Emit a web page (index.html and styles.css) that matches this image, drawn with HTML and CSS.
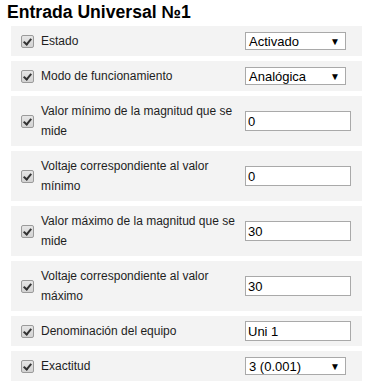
FILE: index.html
```html
<!DOCTYPE html>
<html lang="es">
<head>
    <meta charset="UTF-8">
    <meta name="viewport" content="width=device-width, initial-scale=1.0">
    <title>Entrada Universal №1</title>
    <link rel="stylesheet" href="styles.css">
</head>
<body>
    <h1>Entrada Universal №1</h1>

    <div class="settings">
        <div class="row">
            <span class="check"></span>
            <label class="name">Estado</label>
            <div class="select"><span>Activado</span><span class="arrow">▼</span></div>
        </div>
        <div class="row">
            <span class="check"></span>
            <label class="name">Modo de funcionamiento</label>
            <div class="select"><span>Analógica</span><span class="arrow">▼</span></div>
        </div>
        <div class="row tall">
            <span class="check"></span>
            <label class="name">Valor mínimo de la magnitud que se mide</label>
            <input type="text" value="0">
        </div>
        <div class="row tall">
            <span class="check"></span>
            <label class="name">Voltaje correspondiente al valor mínimo</label>
            <input type="text" value="0">
        </div>
        <div class="row tall">
            <span class="check"></span>
            <label class="name">Valor máximo de la magnitud que se mide</label>
            <input type="text" value="30">
        </div>
        <div class="row tall">
            <span class="check"></span>
            <label class="name">Voltaje correspondiente al valor máximo</label>
            <input type="text" value="30">
        </div>
        <div class="row">
            <span class="check"></span>
            <label class="name">Denominación del equipo</label>
            <input type="text" value="Uni 1">
        </div>
        <div class="row">
            <span class="check"></span>
            <label class="name">Exactitud</label>
            <div class="select"><span>3 (0.001)</span><span class="arrow">▼</span></div>
        </div>
    </div>
</body>
</html>
```

FILE: styles.css
```css
body {
    font-family: "Liberation Sans", Arial, sans-serif;
    background: #fff;
    color: #1e1e1e;
    margin: 0;
    padding: 0;
}
h1 {
    font-size: 17.6px;
    line-height: 20px;
    font-weight: bold;
    color: #000;
    margin: 0 0 4px 0;
    padding: 2px 0 0 7px;
}
.settings {
    width: 351px;
    margin-left: 11px;
}
.row {
    display: flex;
    align-items: center;
    height: 30px;
    margin-bottom: 5px;
    background: #f3f3f3;
}
.row.tall {
    height: 50px;
}
.check {
    width: 11px;
    height: 11px;
    margin-left: 10px;
    border: 1px solid #9a9a9a;
    border-radius: 2px;
    background: linear-gradient(#e6e6e6, #d2d2d2);
    position: relative;
    flex: none;
}
.check::after {
    content: "";
    position: absolute;
    left: 3px;
    top: 1px;
    width: 3px;
    height: 6px;
    border: solid #333;
    border-width: 0 2.5px 2.5px 0;
    transform: rotate(40deg);
}
.name {
    width: 195px;
    margin-left: 7px;
    font-size: 12px;
    line-height: 20px;
    flex: none;
}
.select {
    display: flex;
    justify-content: space-between;
    align-items: center;
    box-sizing: border-box;
    width: 101px;
    height: 18px;
    margin-left: 9px;
    padding: 0 5px 0 3px;
    border: 1px solid #a9a9a9;
    background: #fff;
    font-size: 13px;
    color: #000;
}
.arrow {
    font-size: 10px;
}
input {
    box-sizing: border-box;
    width: 106px;
    height: 20px;
    margin-left: 9px;
    padding: 0 2px;
    border: 1px solid #a9a9a9;
    font-family: "Liberation Sans", Arial, sans-serif;
    font-size: 13px;
    color: #000;
}
```
